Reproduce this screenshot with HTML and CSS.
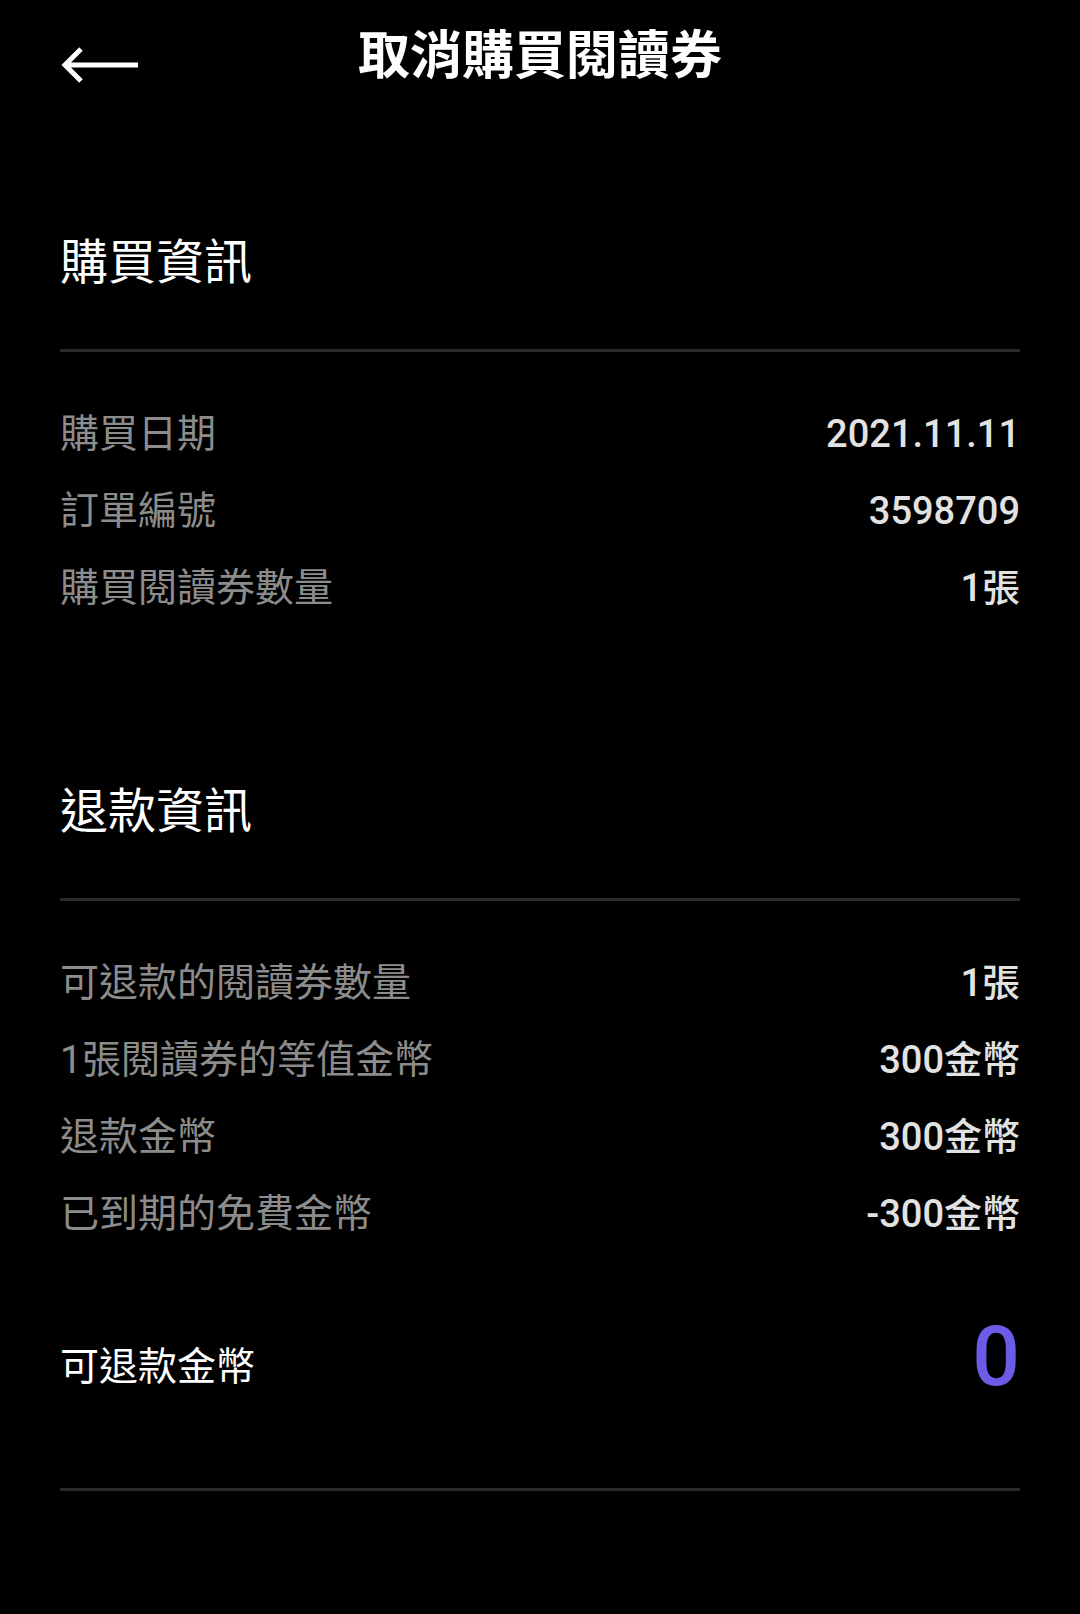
FILE: index.html
```html
<!DOCTYPE html>
<html lang="zh-Hant">
<head>
    <title>取消購買閱讀券</title>
    <meta charset="UTF-8">
    <link rel="stylesheet" href="styles.css">
</head>
<body>
    <header class="topbar">
        <a class="back" href="#">
            <svg width="80" height="36" viewBox="0 0 80 36">
                <path d="M78 18 H5 M21 2 L5 18 L21 34" fill="none" stroke="#fff" stroke-width="5"/>
            </svg>
        </a>
        <h1>取消購買閱讀券</h1>
        <span></span>
    </header>

    <section class="block">
        <h2>購買資訊</h2>
        <div class="rows">
            <div class="row"><span class="label">購買日期</span><span class="value">2021.11.11</span></div>
            <div class="row"><span class="label">訂單編號</span><span class="value">3598709</span></div>
            <div class="row"><span class="label">購買閱讀券數量</span><span class="value">1張</span></div>
        </div>
    </section>

    <section class="block refund">
        <h2>退款資訊</h2>
        <div class="rows">
            <div class="row"><span class="label">可退款的閱讀券數量</span><span class="value">1張</span></div>
            <div class="row"><span class="label">1張閱讀券的等值金幣</span><span class="value">300金幣</span></div>
            <div class="row"><span class="label">退款金幣</span><span class="value">300金幣</span></div>
            <div class="row"><span class="label">已到期的免費金幣</span><span class="value">-300金幣</span></div>
        </div>
        <div class="total">
            <span>可退款金幣</span>
            <span class="amount">0</span>
        </div>
    </section>
</body>
</html>
```

FILE: styles.css
```css
body {
    background: #000;
    color: #fff;
    font-family: Roboto, "Noto Sans CJK TC", sans-serif;
    margin: 0;
    padding: 0 60px;
}
.topbar {
    align-items: center;
    display: grid;
    grid-template-columns: 1fr auto 1fr;
    height: 114px;
}
.back {
    display: flex;
    margin-top: 16px;
}
.topbar h1 {
    font-size: 52px;
    font-weight: 700;
    line-height: 1;
    margin: 0;
}
.block h2 {
    font-size: 48px;
    font-weight: 400;
    line-height: 72px;
    margin: 113px 0 0;
    padding-bottom: 50px;
    border-bottom: 3px solid #2b2b2b;
}
.refund h2 {
    margin-top: 149px;
}
.rows {
    padding-top: 44px;
}
.row {
    display: flex;
    font-size: 39px;
    justify-content: space-between;
    line-height: 77px;
}
.label {
    color: #8c8c8c;
}
.value {
    color: #e2e2e2;
    font-size: 38px;
    font-weight: 500;
}
.total {
    align-items: center;
    border-bottom: 3px solid #2b2b2b;
    display: flex;
    font-size: 39px;
    height: 100px;
    justify-content: space-between;
    margin-top: 60px;
    padding-bottom: 75px;
}
.amount {
    color: #6b5be6;
    font-size: 84px;
    font-weight: 500;
    line-height: 1;
    margin-bottom: 12px;
}
```
